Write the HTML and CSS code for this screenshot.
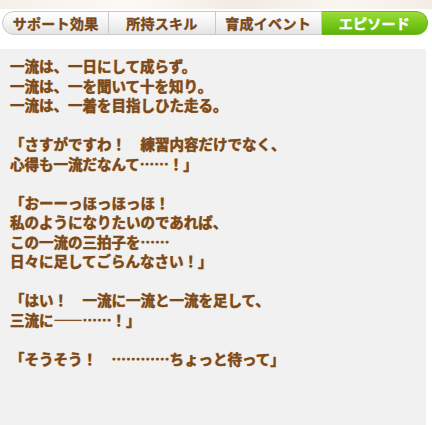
FILE: index.html
```html
<!DOCTYPE html>
<html lang="ja">
<head>
  <meta charset="UTF-8">
  <meta name="viewport" content="width=device-width, initial-scale=1.0">
  <title>エピソード</title>
  <link rel="stylesheet" href="styles.css">
</head>
<body>
  <div class="top-strip"></div>

  <div class="tabs">
    <div class="tab">サポート効果</div>
    <div class="tab">所持スキル</div>
    <div class="tab">育成イベント</div>
    <div class="tab active">エピソード</div>
  </div>

  <div class="episode">
    <p>一流は、一日にして成らず。<br>一流は、一を聞いて十を知り。<br>一流は、一着を目指しひた走る。</p>
    <p>「さすがですわ！　練習内容だけでなく、<br>心得も一流だなんて……！」</p>
    <p>「おーーっほっほっほ！<br>私のようになりたいのであれば、<br>この一流の三拍子を……<br>日々に足してごらんなさい！」</p>
    <p>「はい！　一流に一流と一流を足して、<br>三流に――……！」</p>
    <p>「そうそう！　…………ちょっと待って」</p>
  </div>
</body>
</html>
```

FILE: styles.css
```css
* {
  margin: 0;
  padding: 0;
  box-sizing: border-box;
}
body {
  font-family: "Noto Sans CJK JP", "Noto Sans", sans-serif;
  background: #fff;
  width: 432px;
  height: 425px;
  overflow: hidden;
}
.top-strip {
  height: 9px;
  background: linear-gradient(90deg, #f3ece4, #fbf8f4 30%, #efe6dc 55%, #f8f3ee 80%, #f1e9e0);
  opacity: 0.8;
}
.tabs {
  display: flex;
  margin: 2px 4px 0 2px;
  height: 24px;
}
.tab {
  flex: 1;
  display: flex;
  justify-content: center;
  align-items: center;
  font-size: 14px;
  font-weight: bold;
  color: #7a4819;
  -webkit-text-stroke: 0.4px #7a4819;
  background: linear-gradient(#ffffff, #f3f3f3 50%, #e4e4e4);
  border: 1px solid #c9c9c9;
  border-left: none;
  letter-spacing: 0.3px;
}
.tab:first-child {
  border-left: 1px solid #c9c9c9;
  border-radius: 12px 0 0 12px;
}
.tab.active {
  color: #fff;
  -webkit-text-stroke: 0.4px #fff;
  background: linear-gradient(#9ddc3a, #79c91b 50%, #5fb20e);
  border-color: #6fb522;
  border-radius: 0 12px 12px 0;
}
.episode {
  margin: 14px 6px 0 0;
  height: 380px;
  background: #f1f1f1;
  padding: 7px 0 0 10px;
  font-size: 14.5px;
  font-weight: bold;
  line-height: 19.5px;
  color: #7b4a1d;
  -webkit-text-stroke: 0.4px #7b4a1d;
  text-shadow: 0 0 1px #d9954c;
}
.episode p {
  margin-bottom: 19.5px;
  white-space: nowrap;
}
```
